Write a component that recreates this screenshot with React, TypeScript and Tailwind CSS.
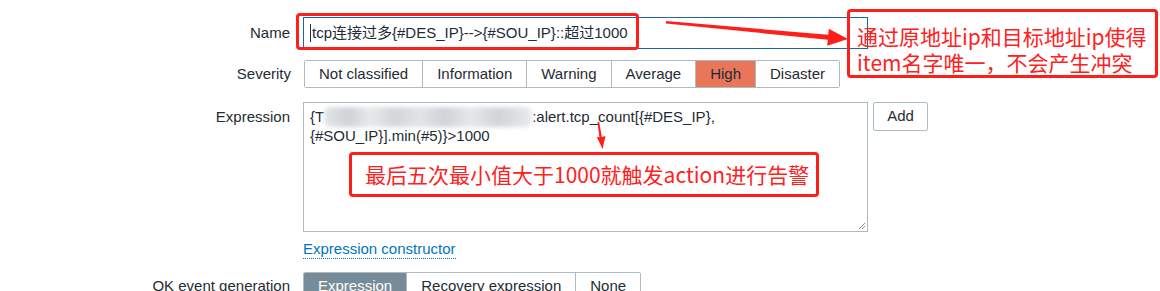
import React from 'react';

const SEVERITIES = ['Not classified', 'Information', 'Warning', 'Average', 'High', 'Disaster'];
const OK_MODES = ['Expression', 'Recovery expression', 'None'];

function Label({ children }: { children: React.ReactNode }) {
  return <div className="text-right text-[15px] leading-[18px] text-[#1f2c33]">{children}</div>;
}

function Segmented({ items, active, activeClass }: { items: string[]; active: string; activeClass: string }) {
  return (
    <div className="flex w-max rounded-[2px] border border-[#acbbc2] overflow-hidden">
      {items.map((s, i) => (
        <div
          key={s}
          className={`h-[26px] px-[14px] flex items-center text-[15px] ${i > 0 ? 'border-l border-[#acbbc2]' : ''} ${
            s === active ? activeClass : 'bg-white text-[#1f2c33]'
          }`}
        >
          {s}
        </div>
      ))}
    </div>
  );
}

export default function App() {
  return (
    <div
      className="relative w-[1160px] h-[291px] overflow-hidden bg-white text-[#1f2c33]"
      style={{ fontFamily: '"Liberation Sans", Arial, "Noto Sans CJK SC", sans-serif' }}
    >
      <div className="flex flex-col pt-[17px]">
        {/* Name */}
        <div className="grid grid-cols-[290px_565px] gap-x-[13px] items-center">
          <Label>Name</Label>
          <div className="h-[32px] border border-[#1f65a6] flex items-center px-[6px] text-[15px]">
            <span className="w-px h-[18px] bg-[#1f2c33] mr-px" />
            tcp连接过多{'{#DES_IP}-->{#SOU_IP}'}::超过1000
          </div>
        </div>

        {/* Severity */}
        <div className="grid grid-cols-[290px_1fr] gap-x-[13px] items-center mt-[11px] pl-px">
          <Label>Severity</Label>
          <Segmented items={SEVERITIES} active="High" activeClass="bg-[#e97659] text-[#1f2c33]" />
        </div>

        {/* Expression */}
        <div className="grid grid-cols-[290px_565px_auto] gap-x-[13px] mt-[14px]">
          <div className="pt-[6px]">
            <Label>Expression</Label>
          </div>
          <div className="relative h-[130px] border border-[#acbbc2] px-[6px] pt-[5px] text-[15px] leading-[18px]">
            {'{T'}
            <span className="inline-block align-middle w-[208px] h-[20px] -mt-[3px] blur-[2px] rounded-[6px] bg-[linear-gradient(90deg,#e4e6e8_0%,#ced3d7_12%,#e8e9ea_22%,#d3d7da_34%,#e2e4e6_46%,#cfd4d8_58%,#e6e7e9_70%,#d1d5d9_84%,#e9eaeb_100%)]" />
            {':alert.tcp_count[{#DES_IP},'}
            <br />
            {'{#SOU_IP}].min(#5)}>1000'}
            <svg className="absolute right-[1px] bottom-[1px]" width="8" height="8" viewBox="0 0 8 8">
              <path d="M7 1 L1 7 M7 4 L4 7" stroke="#8a8f93" strokeWidth="1" />
            </svg>
          </div>
          <div className="-ml-[8px]">
            <div className="w-[55px] h-[29px] border border-[#acbbc2] rounded-[2px] flex items-center justify-center text-[15px]">
              Add
            </div>
          </div>
        </div>

        {/* Expression constructor */}
        <div className="grid grid-cols-[290px_1fr] gap-x-[13px] mt-[5px]">
          <div />
          <div>
            <span className="inline-block text-[15px] leading-[18px] text-[#0275b8] border-b border-dotted border-[#0275b8]">
              Expression constructor
            </span>
          </div>
        </div>

        {/* OK event generation */}
        <div className="grid grid-cols-[290px_1fr] gap-x-[13px] items-center mt-[11px]">
          <Label>OK event generation</Label>
          <Segmented items={OK_MODES} active="Expression" activeClass="bg-[#768c98] text-white" />
        </div>
      </div>

      {/* Annotations */}
      <div className="absolute left-[296px] top-[13px] w-[343px] h-[37px] border-[3px] border-[#ff1f1a] rounded-[4px]" />
      <div
        className="absolute left-[847px] top-[9px] w-[311px] h-[69px] border-[3px] border-[#ff1f1a] rounded-[4px] pl-[7px] pt-[11px] text-[21px] leading-[26px] text-[#ff2020]"
        style={{ fontFamily: '"Noto Sans CJK SC", sans-serif' }}
      >
        <div>通过原地址ip和目标地址ip使得</div>
        <div>item名字唯一，不会产生冲突</div>
      </div>
      <div
        className="absolute left-[349px] top-[152px] w-[470px] h-[45px] border-[3px] border-[#ff1f1a] rounded-[4px] pl-[13px] flex items-center text-[21px] text-[#ff2020]"
        style={{ fontFamily: '"Noto Sans CJK SC", sans-serif' }}
      >
        最后五次最小值大于1000就触发action进行告警
      </div>
      <svg className="absolute left-0 top-0 pointer-events-none" width="1160" height="291">
        <polygon points="666,21 828.2,34.8 828.8,28.8 848,39 827.2,45.8 827.8,39.8 666,23.5" fill="#ff1f1a" />
        <polygon points="597.5,122 599.2,122 601.8,137 605.5,136 602.5,149 596.8,137 599.4,137.2" fill="#ff1f1a" />
      </svg>
    </div>
  );
}
